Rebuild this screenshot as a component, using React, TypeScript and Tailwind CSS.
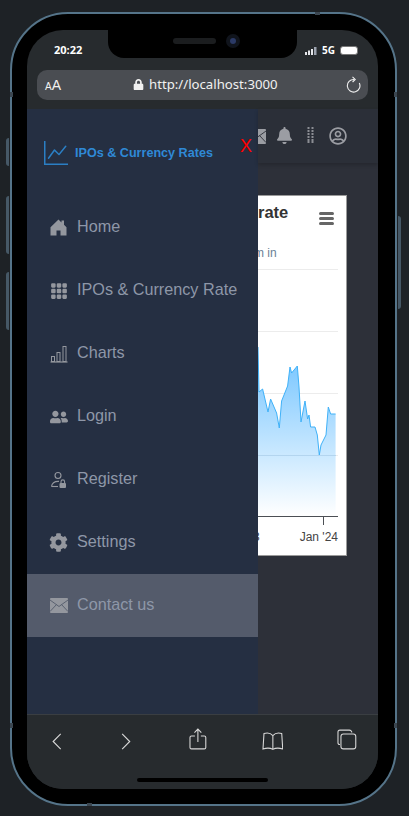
import React from "react";
import { FaUserFriends, FaCog, FaBell, FaRegUserCircle, FaLock } from "react-icons/fa";
import { BsGraphUp, BsGrid3X3GapFill } from "react-icons/bs";

const HomeIcon = () => (
  <svg width="17" height="17" viewBox="0 0 17 17" fill="currentColor">
    <path d="M8.5 0.5L11.5 3.4V1.5H14V5.8L16.5 8.2V16.5H10.5V11.5H6.5V16.5H0.5V8.2Z" />
  </svg>
);

const BarsIcon = () => (
  <svg width="18" height="18" viewBox="0 0 18 18" fill="none" stroke="currentColor" strokeWidth="1">
    <path d="M0.5 17H17.5" strokeWidth="1.2" />
    <rect x="1.5" y="11.5" width="3" height="5" />
    <rect x="7" y="7.5" width="3" height="9" />
    <rect x="13" y="1.5" width="3" height="15" />
  </svg>
);

const RegisterIcon = () => (
  <svg width="18" height="18" viewBox="0 0 18 18" fill="none" stroke="currentColor" strokeWidth="1.1">
    <circle cx="8" cy="4.5" r="3" />
    <path d="M1.5 15.5C2 12 5 10.2 9 10.4" />
    <path d="M1.5 15.5H8" />
    <rect x="9.5" y="12" width="6.5" height="5" rx="1" fill="currentColor" stroke="none" />
    <path d="M11 12V10.7a1.8 1.8 0 0 1 3.6 0V12" />
  </svg>
);

const MailIcon = ({ line }: { line: string }) => (
  <svg width="18" height="15" viewBox="0 0 18 15" className="shrink-0">
    <rect width="18" height="15" rx="1" fill="currentColor" />
    <path d="M0 2L9 8.5L18 2M0 13.5L6.5 6.5M18 13.5L11.5 6.5" fill="none" stroke={line} strokeWidth="0.9" />
  </svg>
);

const navItems = [
  { label: "Home", icon: <HomeIcon /> },
  { label: "IPOs & Currency Rate", icon: <BsGrid3X3GapFill size={18} /> },
  { label: "Charts", icon: <BarsIcon /> },
  { label: "Login", icon: <FaUserFriends size={18} /> },
  { label: "Register", icon: <RegisterIcon /> },
  { label: "Settings", icon: <FaCog size={19} /> },
  { label: "Contact us", icon: <MailIcon line="#545b6b" />, active: true },
];

const linePath =
  "M258 347L259 392L262.6 389L268 412L270.6 399L276.6 413L279.3 428L281.6 401L287.6 386L290 367L291.6 373L297.3 366L299 387L301 422L305 401L307.6 419L309 415L310.6 427L315 427L317.3 435L319.3 455L321 445L326 435L328.3 407L330.6 414L335.6 414";

const Chart = () => (
  <svg width="89" height="290" viewBox="258 265 89 290" className="block">
    <defs>
      <linearGradient id="area" x1="0" y1="0" x2="0" y2="1">
        <stop offset="0" stopColor="#6fc2ff" />
        <stop offset="1" stopColor="#ffffff" />
      </linearGradient>
    </defs>
    {[269.5, 331.5, 393.5, 455.5].map((y) => (
      <path key={y} d={`M258 ${y}H338`} stroke="#ececec" strokeWidth="1" />
    ))}
    <path d={`${linePath}V516H258Z`} fill="url(#area)" />
    <path d={linePath} fill="none" stroke="#3fb1f8" strokeWidth="1" />
    <path d="M258 455.5H336" stroke="#a9cde8" strokeWidth="0.7" />
    <path d="M258 516.5H338M323.5 516V525" stroke="#4b4f55" strokeWidth="1" />
    <text x="338" y="541" textAnchor="end" fontSize="12" fill="#444" fontFamily="Liberation Sans, sans-serif">
      Jan '24
    </text>
    <text x="253" y="541" fontSize="12" fill="#444" fontFamily="Liberation Sans, sans-serif">
      3
    </text>
  </svg>
);

export default function App() {
  return (
    <div className="relative w-[409px] h-[816px] overflow-hidden bg-[#1e2226] pt-[12px] pl-[10px] font-['Liberation_Sans',sans-serif]">
      {/* side buttons */}
      <div className="absolute left-[6px] top-[138px] w-[3px] h-[28px] rounded-l-sm bg-[#465866]" />
      <div className="absolute left-[6px] top-[196px] w-[3px] h-[58px] rounded-l-sm bg-[#465866]" />
      <div className="absolute left-[6px] top-[272px] w-[3px] h-[58px] rounded-l-sm bg-[#465866]" />
      <div className="absolute left-[398px] top-[216px] w-[3px] h-[93px] rounded-r-sm bg-[#465866]" />

      {/* phone */}
      <div className="relative w-[387px] h-[794px] rounded-[58px] border-2 border-[#557489] bg-black pt-[16px] pl-[15px]">
        {/* antenna bands */}
        <div className="absolute left-[303px] -top-[2px] w-[5px] h-[3px] bg-[#3b4650]" />
        <div className="absolute -left-[2px] top-[78px] w-[3px] h-[5px] bg-[#3b4650]" />
        <div className="absolute -right-[2px] top-[78px] w-[3px] h-[5px] bg-[#3b4650]" />
        <div className="absolute -left-[2px] top-[709px] w-[3px] h-[5px] bg-[#3b4650]" />
        <div className="absolute -right-[2px] top-[709px] w-[3px] h-[5px] bg-[#3b4650]" />
        <div className="absolute left-[75px] -bottom-[2px] w-[5px] h-[3px] bg-[#3b4650]" />

        <div className="relative w-[351px] h-[759px] rounded-[36px] overflow-hidden bg-[#272b2e] flex flex-col">
          {/* notch */}
          <div className="absolute left-[81px] top-0 w-[189px] h-[28px] rounded-b-[16px] bg-black flex items-start justify-center gap-[10px] pt-[8px] pl-[8px]">
            <div className="w-[43px] h-[6px] rounded-full bg-[#1b1d1f]" />
            <div className="w-[14px] h-[14px] -mt-[4px] rounded-full bg-[#10141c] flex items-center justify-center">
              <div className="w-[6px] h-[6px] rounded-full bg-[#2b3a66]" />
            </div>
          </div>

          {/* status bar */}
          <div className="h-[40px] shrink-0 flex items-start justify-between pl-[27px] pr-[20px] pt-[13px]">
            <span className="text-[11px] leading-[14px] font-bold text-white font-['Open_Sans',sans-serif]">20:22</span>
            <div className="flex items-center gap-[4px] text-white mt-[1px]">
              <svg width="13" height="9" viewBox="0 0 13 9" fill="#e5e7eb">
                <rect x="0" y="6" width="2" height="3" />
                <rect x="3" y="4.5" width="2" height="4.5" />
                <rect x="6" y="3" width="2" height="6" />
                <rect x="9" y="1" width="2.5" height="8" fill="#9ca3af" />
              </svg>
              <span className="text-[10px] leading-[12px] font-bold font-['Open_Sans',sans-serif]">5G</span>
              <div className="w-[18px] h-[9px] ml-[1px] rounded-[3px] bg-white border border-[#777]" />
            </div>
          </div>

          {/* url bar */}
          <div className="mx-[10px] h-[30px] shrink-0 rounded-[10px] bg-[#4a4d52] flex items-center pl-[8px] pr-[7px] text-[#f1f1f1]">
            <span className="w-[88px] leading-none">
              <span className="text-[10px]">A</span>
              <span className="text-[14px]">A</span>
            </span>
            <FaLock size={11} className="mr-[5px] -mt-[1px]" />
            <span className="text-[13.2px] leading-none font-['Noto_Sans',sans-serif]">http://localhost:3000</span>
            <svg className="ml-auto" width="16" height="18" viewBox="0 0 16 18" fill="none" stroke="#f1f1f1" strokeWidth="1.1">
              <path d="M9 3.5A6.3 6.3 0 1 0 14.3 7" />
              <path d="M7.5 0.8L10.2 3.4L7.6 6" />
            </svg>
          </div>

          {/* page */}
          <div className="mt-[9px] flex-1 min-h-0 flex">
            <aside className="w-[231px] shrink-0 bg-[#252f42] flex flex-col">
              <div className="h-[87px] shrink-0 flex items-start pl-[17px] pt-[32px]">
                <BsGraphUp size={24} className="text-[#2b7fc4] shrink-0" />
                <span className="ml-[7px] mt-[4px] text-[12.6px] leading-[16px] font-bold text-[#2f89d6] whitespace-nowrap">
                  IPOs &amp; Currency Rates
                </span>
                <span className="ml-[27px] -mt-[6px] text-[18px] leading-[22px] text-[#ff0000]">X</span>
              </div>
              {navItems.map((item) => (
                <div
                  key={item.label}
                  className={`h-[63px] shrink-0 flex items-center pl-[22px] gap-[9px] text-[16.2px] text-[#8e97a8] ${
                    item.active ? "bg-[#545b6b]" : ""
                  }`}
                >
                  <span className="w-[19px] flex justify-center text-[#94979e]">{item.icon}</span>
                  <span className="-mt-[2px]">{item.label}</span>
                </div>
              ))}
            </aside>

            <main className="flex-1 min-w-0 bg-[#2d3039] flex flex-col">
              <header className="h-[54px] shrink-0 bg-[#2b2f38] shadow-[0_2px_4px_rgba(0,0,0,0.2)] flex items-center text-[#9b9da3] overflow-hidden">
                <div className="w-[8px] h-[15px] mt-[1px] overflow-hidden flex justify-end shrink-0">
                  <MailIcon line="#2b2f38" />
                </div>
                <FaBell size={17} className="ml-[10px] -mt-[1px] shrink-0" />
                <svg className="ml-[14px] -mt-[2px] shrink-0" width="7" height="16" viewBox="0 0 7 16" fill="#8b8d93">
                  {[0, 3, 6, 9, 12, 14].map((y) => (
                    <g key={y}>
                      <rect x="0.5" y={y} width="2" height="2" />
                      <rect x="4.5" y={y} width="2" height="2" />
                    </g>
                  ))}
                </svg>
                <FaRegUserCircle size={18} className="ml-[15px] -mt-[1px] shrink-0" />
              </header>

              <div className="pt-[32px]">
                <div className="w-[89px] h-[361px] bg-white border border-l-0 border-[#9a9a9a] overflow-hidden flex flex-col">
                  <div className="h-[69px] shrink-0 flex items-start justify-between pt-[6px] pr-[12px]">
                    <div>
                      <div className="text-[16.5px] leading-[21px] font-bold text-[#333]">rate</div>
                      <div className="mt-[23px] -ml-[4px] text-[12px] leading-[14px] text-[#6a7f96]">m in</div>
                    </div>
                    <svg className="mt-[10px]" width="15" height="13" viewBox="0 0 15 13" fill="#666">
                      <rect width="15" height="3" rx="1.5" />
                      <rect y="5" width="15" height="3" rx="1.5" />
                      <rect y="10" width="15" height="3" rx="1.5" />
                    </svg>
                  </div>
                  <Chart />
                </div>
              </div>
            </main>
          </div>

          {/* browser toolbar */}
          <div className="h-[75px] shrink-0 bg-[#272b2e] border-t border-[#3a3e42] relative">
            <div className="h-[35px] flex items-end justify-between pl-[25px] pr-[21px] text-[#d8d8d8]">
              <svg width="10" height="17" viewBox="0 0 10 18" fill="none" stroke="currentColor" strokeWidth="1.2">
                <path d="M9 1L1 9L9 17" />
              </svg>
              <svg className="ml-[59px]" width="10" height="17" viewBox="0 0 10 18" fill="none" stroke="currentColor" strokeWidth="1.2">
                <path d="M1 1L9 9L1 17" />
              </svg>
              <svg className="ml-[58px]" width="18" height="22" viewBox="0 0 18 22" fill="none" stroke="currentColor" strokeWidth="1.1">
                <path d="M9 14V1M5.5 4.5L9 1L12.5 4.5" />
                <path d="M6 8H2.5A1.5 1.5 0 0 0 1 9.5V19.5A1.5 1.5 0 0 0 2.5 21H15.5A1.5 1.5 0 0 0 17 19.5V9.5A1.5 1.5 0 0 0 15.5 8H12" />
              </svg>
              <svg className="ml-[55px]" width="22" height="18" viewBox="0 0 22 18" fill="none" stroke="currentColor" strokeWidth="1.1">
                <path d="M11 3.5C9 1.3 5 0.6 2 1.5L1 17C4.5 16 8.5 16 11 17.5C13.5 16 17.5 16 21 17L20 1.5C17 0.6 13 1.3 11 3.5V17.5" />
              </svg>
              <svg className="ml-[54px]" width="20" height="21" viewBox="0 0 20 21" fill="none" stroke="currentColor" strokeWidth="1.1">
                <path d="M3 15.5H2.5A1.5 1.5 0 0 1 1 14V3A2 2 0 0 1 3 1H12.5A2.5 2.5 0 0 1 15 3.5" />
                <rect x="4" y="5" width="15" height="15" rx="2.5" />
              </svg>
            </div>
            <div className="absolute left-[110px] top-[63px] w-[131px] h-[4px] rounded-full bg-black" />
          </div>
        </div>
      </div>
    </div>
  );
}
